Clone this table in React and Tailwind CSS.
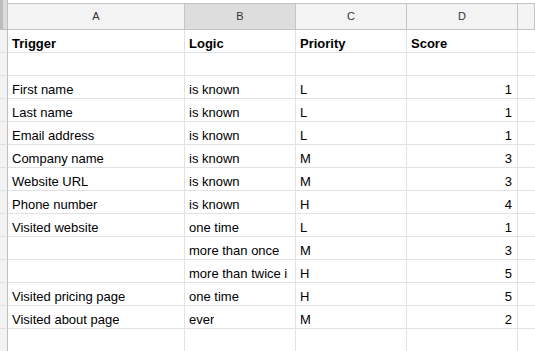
import React from "react";

const rows = [
  { a: "Trigger", b: "Logic", c: "Priority", d: "Score", bold: true },
  { a: "", b: "", c: "", d: "" },
  { a: "First name", b: "is known", c: "L", d: "1" },
  { a: "Last name", b: "is known", c: "L", d: "1" },
  { a: "Email address", b: "is known", c: "L", d: "1" },
  { a: "Company name", b: "is known", c: "M", d: "3" },
  { a: "Website URL", b: "is known", c: "M", d: "3" },
  { a: "Phone number", b: "is known", c: "H", d: "4" },
  { a: "Visited website", b: "one time", c: "L", d: "1" },
  { a: "", b: "more than once", c: "M", d: "3" },
  { a: "", b: "more than twice in a day", c: "H", d: "5" },
  { a: "Visited pricing page", b: "one time", c: "H", d: "5" },
  { a: "Visited about page", b: "ever", c: "M", d: "2" },
  { a: "", b: "", c: "", d: "" },
];

const cols = "grid grid-cols-[8px_177px_111px_111px_111px_1fr]";

const App = () => {
  return (
    <div className="w-[535px] h-[351px] overflow-hidden bg-white font-['Liberation_Sans',Arial,sans-serif] text-[13px] text-black">
      {/* Column headers */}
      <div className={`${cols} h-[30px]`}>
        <div className="flex h-full border-r border-[#c0c0c0] border-b bg-[#dcdcdc]">
          <div className="w-[3px] h-full bg-[#bdbdbd]" />
        </div>
        {["A", "B", "C", "D", ""].map((h, i) => (
          <div key={i} className="pt-[3px] h-full">
            <div
              className={`h-full flex items-center justify-center border-t border-b border-r border-[#c4c4c4] text-[11px] text-[#333] ${
                i === 1 ? "bg-[#dddddd]" : "bg-[#f3f3f3]"
              }`}
            >
              {h}
            </div>
          </div>
        ))}
      </div>

      {/* Rows */}
      {rows.map((r, i) => (
        <div key={i} className={`${cols} h-[23px]`}>
          <div className="h-full bg-[#f3f3f3] border-r border-[#c0c0c0] border-b border-b-[#e2e2e2]" />
          <div className={`h-full flex items-end leading-[16px] pl-[4px] border-r border-b border-[#e2e2e2] ${r.bold ? "font-bold" : ""}`}>
            {r.a}
          </div>
          <div className={`h-full flex items-end leading-[16px] pl-[4px] pr-[7px] border-r border-b border-[#e2e2e2] ${r.bold ? "font-bold" : ""}`}>
            <span className="block overflow-hidden whitespace-nowrap">{r.b}</span>
          </div>
          <div className={`h-full flex items-end leading-[16px] pl-[4px] border-r border-b border-[#e2e2e2] ${r.bold ? "font-bold" : ""}`}>
            {r.c}
          </div>
          <div
            className={`h-full flex items-end leading-[16px] border-r border-b border-[#e2e2e2] ${
              r.bold ? "font-bold pl-[4px] justify-start" : "pr-[5px] justify-end"
            }`}
          >
            {r.d}
          </div>
          <div className="h-full border-b border-[#e2e2e2]" />
        </div>
      ))}
    </div>
  );
};

export default App;
